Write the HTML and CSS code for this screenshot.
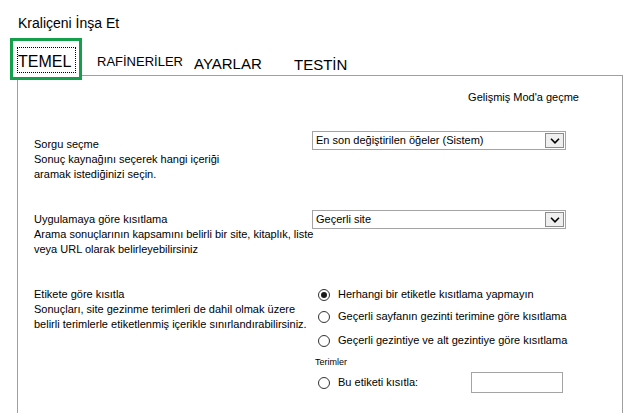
FILE: index.html
```html
<!DOCTYPE html>
<html lang="tr">
<head>
<meta charset="utf-8">
<link rel="stylesheet" href="styles.css">
</head>
<body>
<div class="title">Kraliçeni İnşa Et</div>
<div class="tabs">
  <div class="tab tab-active"><div class="focus">TEMEL</div></div>
  <div class="tab tab-raf">RAFİNERİLER</div>
  <div class="tab tab-ayar">AYARLAR</div>
  <div class="tab tab-test">TESTİN</div>
</div>
<div class="panel">
  <div class="adv">Gelişmiş Mod'a geçme</div>

  <div class="row row1">
    <div class="desc d1">
      <div>Sorgu seçme</div>
      <div>Sonuç kaynağını seçerek hangi içeriği</div>
      <div>aramak istediğinizi seçin.</div>
    </div>
    <div class="ctrl">
      <div class="select">
        <span class="sel-text">En son değiştirilen öğeler (Sistem)</span>
        <span class="sel-btn"><svg width="10" height="6" viewBox="0 0 10 6"><polyline points="1,0.8 5,4.8 9,0.8" fill="none" stroke="#000" stroke-width="1.6"/></svg></span>
      </div>
    </div>
  </div>

  <div class="row row2">
    <div class="desc d2">
      <div>Uygulamaya göre kısıtlama</div>
      <div>Arama sonuçlarının kapsamını belirli bir site, kitaplık, liste</div>
      <div>veya URL olarak belirleyebilirsiniz</div>
    </div>
    <div class="ctrl">
      <div class="select">
        <span class="sel-text">Geçerli site</span>
        <span class="sel-btn"><svg width="10" height="6" viewBox="0 0 10 6"><polyline points="1,0.8 5,4.8 9,0.8" fill="none" stroke="#000" stroke-width="1.6"/></svg></span>
      </div>
    </div>
  </div>

  <div class="row row3">
    <div class="desc d3">
      <div>Etikete göre kısıtla</div>
      <div>Sonuçları, site gezinme terimleri de dahil olmak üzere</div>
      <div>belirli terimlerle etiketlenmiş içerikle sınırlandırabilirsiniz.</div>
    </div>
    <div class="ctrl radios">
      <div class="opt o1"><span class="radio checked"></span><span>Herhangi bir etiketle kısıtlama yapmayın</span></div>
      <div class="opt o2"><span class="radio"></span><span>Geçerli sayfanın gezinti terimine göre kısıtlama</span></div>
      <div class="opt o3"><span class="radio"></span><span>Geçerli gezintiye ve alt gezintiye göre kısıtlama</span></div>
      <div class="terms">Terimler</div>
      <div class="opt o4"><span class="radio"></span><span class="lbl4">Bu etiketi kısıtla:</span><span class="textbox"></span></div>
    </div>
  </div>
</div>
</body>
</html>
```
FILE: styles.css
```css
html, body {
  margin: 0;
  padding: 0;
  background: #fff;
  overflow: hidden;
}
body {
  font-family: "Liberation Sans", Arial, sans-serif;
  color: #000;
  font-size: 11px;
}
.title {
  font-size: 14px;
  line-height: 16px;
  padding: 15px 0 0 18px;
}
.tabs {
  display: flex;
  align-items: flex-end;
  margin: 7px 0 0 10px;
}
.tab {
  color: #000;
}
.tab-active {
  position: relative;
  z-index: 1;
  background: #fff;
  border: 3px solid #14a04a;
  width: 72px;
  height: 42px;
  box-sizing: border-box;
  padding: 6px 0 0 4px;
}
.focus {
  border: 1px dotted #000;
  width: 59px;
  height: 26px;
  box-sizing: border-box;
  padding: 6px 0 0 0;
  font-size: 16px;
  line-height: 16px;
}
.tab-raf {
  margin-left: 15px;
  width: 97px;
  font-size: 13px;
  line-height: 15px;
  padding-bottom: 11px;
}
.tab-ayar {
  width: 100px;
  font-size: 15px;
  line-height: 17px;
  padding-bottom: 8px;
}
.tab-test {
  font-size: 15px;
  line-height: 17px;
  padding-bottom: 7px;
}
.panel {
  margin: -5px 0 0 17px;
  width: 606px;
  box-sizing: border-box;
  border: 1px solid #a0a0a0;
  border-bottom: none;
  padding: 14px 43px 60px 16px;
  line-height: 15px;
}
.adv {
  text-align: right;
}
.row {
  display: flex;
  align-items: flex-start;
}
.row1 { margin-top: 26px; }
.row2 { margin-top: 28px; }
.row3 { margin-top: 30px; }
.desc {
  width: 278px;
  flex: none;
  white-space: nowrap;
}
.d1 { padding-top: 6px; }
.d2 { padding-top: 2px; }
.d3 { padding-top: 0; }
.ctrl {
  flex: none;
}
.select {
  display: flex;
  align-items: stretch;
  width: 254px;
  height: 19px;
  box-sizing: border-box;
  border: 1px solid #a4a4a4;
  background: #fff;
}
.sel-text {
  flex: 1;
  padding-left: 3px;
  line-height: 17px;
  font-size: 11px;
  white-space: nowrap;
}
.sel-btn {
  width: 19px;
  box-sizing: border-box;
  margin: 1px 1px 1px 0;
  border: 1px solid #8c8c8c;
  background: #efefef;
  display: flex;
  align-items: center;
  justify-content: center;
}
.radios {
  padding-left: 6px;
  white-space: nowrap;
}
.opt {
  display: flex;
  align-items: center;
  height: 15px;
}
.o1 { margin-top: 0; }
.o2 { margin-top: 7px; }
.o3 { margin-top: 9px; }
.radio {
  width: 12px;
  height: 12px;
  box-sizing: border-box;
  border: 1px solid #333;
  border-radius: 50%;
  margin-right: 8px;
  display: flex;
  align-items: center;
  justify-content: center;
  flex: none;
}
.radio.checked::after {
  content: "";
  width: 6px;
  height: 6px;
  border-radius: 50%;
  background: #1a1a1a;
}
.terms {
  font-size: 9px;
  line-height: 12px;
  margin: 8px 0 0 -3px;
}
.o4 {
  margin-top: 7px;
}
.lbl4 {
  width: 133px;
  flex: none;
}
.textbox {
  width: 92px;
  height: 21px;
  box-sizing: border-box;
  border: 1px solid #a4a4a4;
  background: #fff;
  flex: none;
}
```
